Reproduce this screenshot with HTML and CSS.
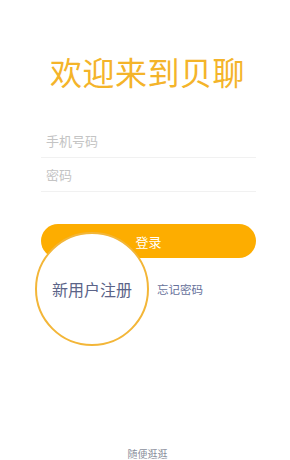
FILE: index.html
```html
<!DOCTYPE html>
<html lang="zh">
<head>
<meta charset="utf-8">
<link rel="stylesheet" href="styles.css">
</head>
<body>
<div class="page">
  <h1 class="title">欢迎来到贝聊</h1>
  <div class="form">
    <div class="field"><span class="placeholder">手机号码</span></div>
    <div class="field"><span class="placeholder">密码</span></div>
    <div class="btn">登录</div>
    <div class="links">
      <span class="register">新用户注册</span>
      <span class="forgot">忘记密码</span>
    </div>
  </div>
  <div class="spacer"></div>
  <div class="bottom">随便逛逛</div>
</div>
</body>
</html>
```
FILE: styles.css
```css
html, body {
  margin: 0;
  padding: 0;
  background: #ffffff;
}
body {
  font-family: "Noto Sans CJK SC", "Noto Sans", sans-serif;
  width: 290px;
  height: 460px;
  overflow: hidden;
}
.page {
  display: flex;
  flex-direction: column;
  height: 460px;
}
.title {
  margin: 51px 0 0 0;
  font-size: 32px;
  line-height: 40px;
  font-weight: 400;
  color: #f4b42a;
  text-align: center;
  padding-left: 5px;
  letter-spacing: 0.5px;
}
.form {
  margin: 33px 0 0 41px;
  width: 215px;
  display: flex;
  flex-direction: column;
}
.field {
  height: 33px;
  border-bottom: 1px solid #f1f1f1;
  display: flex;
  align-items: center;
  padding-left: 5px;
}
.placeholder {
  font-size: 13px;
  color: #c4c4c4;
}
.btn {
  margin-top: 32px;
  height: 34px;
  border-radius: 17px;
  background: #fdad00;
  color: #ffffff;
  font-size: 13px;
  display: flex;
  align-items: center;
  justify-content: center;
}
.links {
  margin-top: 20px;
  height: 22px;
  display: flex;
  align-items: center;
  position: relative;
}
.register {
  position: relative;
  margin-left: 11px;
  font-size: 16px;
  color: #5b6488;
  z-index: 1;
}
.register::before {
  content: "";
  position: absolute;
  left: 50%;
  top: 50%;
  width: 110px;
  height: 110px;
  margin-left: -57px;
  margin-top: -57px;
  border: 2px solid #f3b638;
  border-radius: 50%;
  background: #ffffff;
  z-index: -1;
}
.forgot {
  margin-left: 25px;
  font-size: 11.5px;
  color: #66719a;
}
.spacer {
  flex: 1;
}
.bottom {
  text-align: center;
  font-size: 10px;
  color: #8a8f9c;
  line-height: 12px;
  margin-bottom: 0;
  padding-left: 5px;
}
```
